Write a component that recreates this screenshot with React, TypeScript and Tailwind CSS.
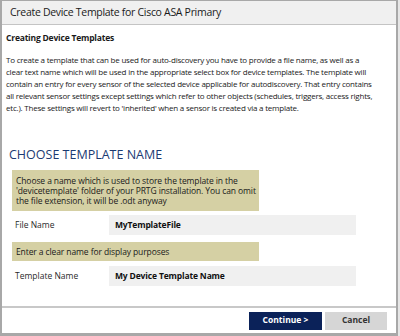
const font = { fontFamily: '"Open Sans", "Noto Sans", sans-serif' };

const intro = [
  "To create a template that can be used for auto-discovery you have to provide a file name, as well as a",
  "clear text name which will be used in the appropriate select box for device templates. The template will",
  "contain an entry for every sensor of the selected device applicable for autodiscovery. That entry contains",
  "all relevant sensor settings except settings which refer to other objects (schedules, triggers, access rights,",
  "etc.). These settings will revert to 'inherited' when a sensor is created via a template.",
];

const fileHint = [
  "Choose a name which is used to store the template in the",
  "'devicetemplate' folder of your PRTG installation. You can omit",
  "the file extension, it will be .odt anyway",
];

function Hint({ lines }: { lines: string[] }) {
  return (
    <div className="ml-[6px] flex w-[247px] flex-col justify-center bg-[#d5d0a4] px-[4px] py-[4px] text-[8.5px] leading-[10px] tracking-[-0.1px] text-[#1a1a1a]">
      {lines.map((l) => (
        <div key={l} className="whitespace-nowrap">
          {l}
        </div>
      ))}
    </div>
  );
}

function Field({ label, value }: { label: string; value: string }) {
  return (
    <div className="flex items-center">
      <div className="w-[103px] pl-[9px] text-[8.5px] text-[#2a2a2a]">{label}</div>
      <div className="flex h-[20px] w-[247px] items-center bg-[#f0f0f0] px-[6px] text-[8.5px] font-bold tracking-[-0.15px] text-[#111]">
        {value}
      </div>
    </div>
  );
}

export default function App() {
  return (
    <div className="h-[336px] w-[400px] bg-[#e6e6e6]" style={font}>
      <div className="flex h-[336px] w-[398px] flex-col border-x-2 border-t border-b-[3px] border-[#a8a8a8] bg-white">
        <div className="flex h-[24px] shrink-0 items-center border-b border-[#c4c4c4] bg-[#f0f0f0] pl-[8px] text-[10.5px] tracking-[-0.3px] text-[#1a1a1a]">
          Create Device Template for Cisco ASA Primary
        </div>

        <div className="flex-1 px-[4px]">
          <div className="mt-[7px] text-[8.5px] font-bold leading-[12px] tracking-[-0.2px] text-[#1a1a1a]">
            Creating Device Templates
          </div>
          <div className="mt-[10px] text-[8px] leading-[12px] tracking-[-0.22px] text-[#1a1a1a]">
            {intro.map((l) => (
              <div key={l} className="whitespace-nowrap">
                {l}
              </div>
            ))}
          </div>

          <div className="mt-[33px] pl-[3px] text-[12.5px] leading-[16px] text-[#1b3a72]">
            CHOOSE TEMPLATE NAME
          </div>

          <div className="mt-[7px] flex h-[41px]">
            <Hint lines={fileHint} />
          </div>
          <div className="mt-[4px]">
            <Field label="File Name" value="MyTemplateFile" />
          </div>
          <div className="mt-[7px] flex h-[19px]">
            <Hint lines={["Enter a clear name for display purposes"]} />
          </div>
          <div className="mt-[5px]">
            <Field label="Template Name" value="My Device Template Name" />
          </div>
        </div>

        <div className="flex h-[27px] shrink-0 items-center justify-end gap-[3px] border-t-2 border-[#c8c8c8] pr-[9px]">
          <button className="h-[18px] w-[73px] bg-[#0b2259] text-[8.5px] font-bold text-white">
            Continue &gt;
          </button>
          <button className="h-[18px] w-[62px] bg-[#d6d6d6] text-[8.5px] font-bold text-[#333]">
            Cancel
          </button>
        </div>
      </div>
    </div>
  );
}
